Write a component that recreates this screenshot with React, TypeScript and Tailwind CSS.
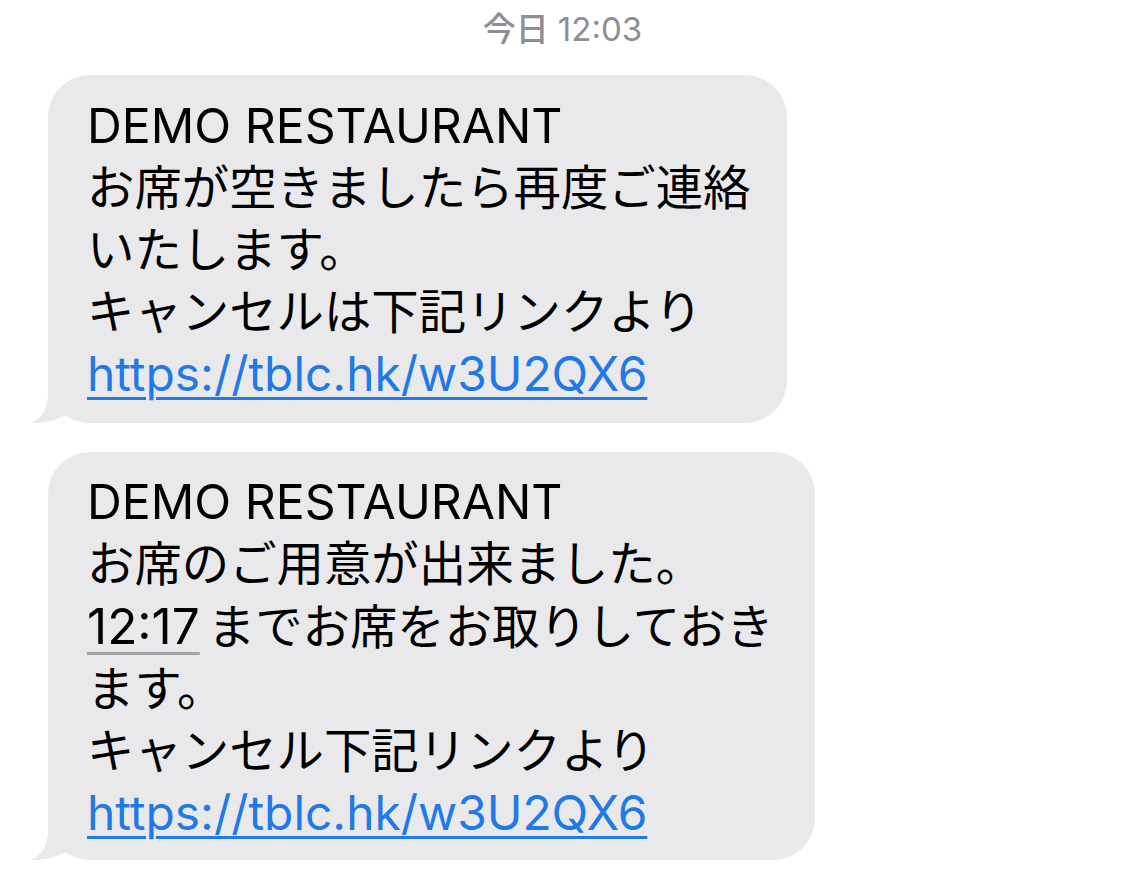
import React from "react";

const font = "font-['Inter','Noto_Sans_CJK_JP',sans-serif]";

function Tail() {
  return (
    <svg
      className="absolute left-[-17px] bottom-0"
      width="60"
      height="60"
      viewBox="0 0 60 60"
    >
      <path
        d="M17,0 L17,30 C17,46 11,55 0,60 C12,60 24,58 35,52 L60,30 L60,0 Z"
        fill="#e9e9eb"
      />
    </svg>
  );
}

function Link() {
  return (
    <span className="text-[47.9px] text-[#1f7ae8] underline decoration-[3px] underline-offset-[6px]">
      https://tblc.hk/w3U2QX6
    </span>
  );
}

function Latin({ children }: { children: React.ReactNode }) {
  return <span className="text-[48.2px]">{children}</span>;
}

export default function App() {
  return (
    <div className={`w-[1125px] h-[879px] bg-white overflow-hidden ${font}`}>
      <div className="h-[56px] flex items-center justify-center pt-[2px] text-[33px] leading-[36px] text-[#8e8e93]">
        <span className="font-medium">今日</span>
        <span className="ml-[9px]">12:03</span>
      </div>
      <div className="flex flex-col gap-[29px] pl-[48px] pt-[19px]">
        <div className="relative w-[739px] h-[348px] rounded-[42px] bg-[#e9e9eb] pl-[39px] pt-[20px] text-[47.4px] leading-[62px] text-black">
          <Tail />
          <div className="relative whitespace-nowrap">
            <Latin>DEMO RESTAURANT</Latin>
          </div>
          <div className="relative whitespace-nowrap">お席が空きましたら再度ご連絡</div>
          <div className="relative whitespace-nowrap">いたします。</div>
          <div className="relative whitespace-nowrap">キャンセルは下記リンクより</div>
          <div className="relative whitespace-nowrap">
            <Link />
          </div>
        </div>
        <div className="relative w-[767px] h-[408px] rounded-[42px] bg-[#e9e9eb] pl-[39px] pt-[19px] text-[47.4px] leading-[62px] text-black">
          <Tail />
          <div className="relative whitespace-nowrap">
            <Latin>DEMO RESTAURANT</Latin>
          </div>
          <div className="relative whitespace-nowrap">お席のご用意が出来ました。</div>
          <div className="relative whitespace-nowrap">
            <span className="text-[49.5px] underline decoration-[#a4a4a8] decoration-[3px] underline-offset-[8px]">
              12:17
            </span>
            <span className="ml-[8px]">までお席をお取りしておき</span>
          </div>
          <div className="relative whitespace-nowrap">ます。</div>
          <div className="relative whitespace-nowrap">キャンセル下記リンクより</div>
          <div className="relative whitespace-nowrap">
            <Link />
          </div>
        </div>
      </div>
    </div>
  );
}
